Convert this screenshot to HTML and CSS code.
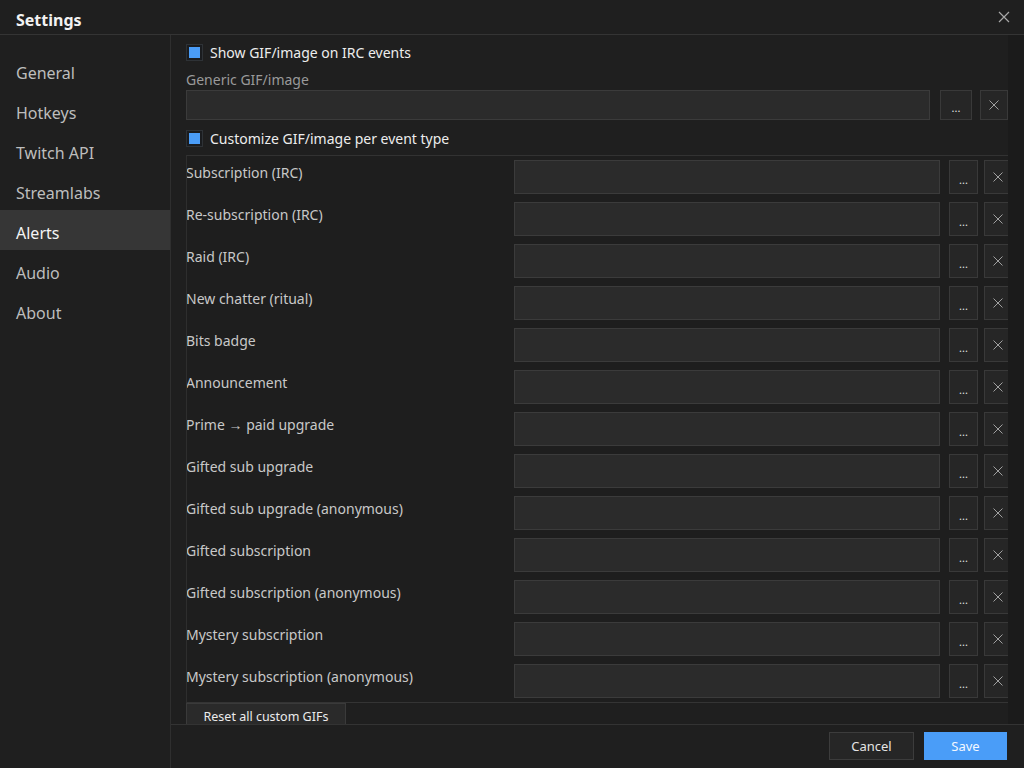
FILE: index.html
```html
<!DOCTYPE html>
<html>
<head>
<meta charset="utf-8">
<link rel="stylesheet" href="styles.css">
</head>
<body>
<div class="window">
  <div class="titlebar">
    <span class="title">Settings</span>
    <span class="close"><svg width="12" height="12" viewBox="0 0 12 12"><path d="M1 1L11 11M11 1L1 11" stroke="#a8a8a8" stroke-width="1.2" fill="none"/></svg></span>
  </div>
  <div class="main">
    <nav class="sidebar">
      <div class="nav-item">General</div>
      <div class="nav-item">Hotkeys</div>
      <div class="nav-item">Twitch API</div>
      <div class="nav-item">Streamlabs</div>
      <div class="nav-item active">Alerts</div>
      <div class="nav-item">Audio</div>
      <div class="nav-item">About</div>
    </nav>
    <div class="right">
      <div class="scroll">
        <div class="content">
          <label class="check first"><span class="box"><span class="tick"></span></span><span class="check-text">Show GIF/image on IRC events</span></label>
          <div class="field-label">Generic GIF/image</div>
          <div class="generic-row">
            <div class="input"></div>
            <div class="btn dots">...</div>
            <div class="btn x"><svg width="10" height="10" viewBox="0 0 10 10"><path d="M0.5 0.5L9.5 9.5M9.5 0.5L0.5 9.5" stroke="#a0a0a0" stroke-width="1" fill="none"/></svg></div>
          </div>
          <label class="check second"><span class="box"><span class="tick"></span></span><span class="check-text">Customize GIF/image per event type</span></label>
          <div class="table" id="table"></div>
          <div class="reset">Reset all custom GIFs</div>
        </div>
        <div class="track"></div>
      </div>
      <div class="footer">
        <div class="fbtn cancel">Cancel</div>
        <div class="fbtn save">Save</div>
      </div>
    </div>
  </div>
</div>
<script src="script.js"></script>
</body>
</html>
```
FILE: script.js
```js
const rows = ["Subscription (IRC)","Re-subscription (IRC)","Raid (IRC)","New chatter (ritual)","Bits badge","Announcement","Prime \u2192 paid upgrade","Gifted sub upgrade","Gifted sub upgrade (anonymous)","Gifted subscription","Gifted subscription (anonymous)","Mystery subscription","Mystery subscription (anonymous)"];
const t = document.getElementById('table');
const xsvg = '<svg width="10" height="10" viewBox="0 0 10 10"><path d="M0.5 0.5L9.5 9.5M9.5 0.5L0.5 9.5" stroke="#a0a0a0" stroke-width="1" fill="none"/></svg>';
t.innerHTML = rows.map(r => '<div class="row"><div class="row-label">' + r + '</div><div class="input"></div><div class="btn dots">...</div><div class="btn x">' + xsvg + '</div></div>').join('');
```
FILE: styles.css
```css
* { box-sizing: border-box; }
html, body { margin: 0; padding: 0; background: #1f1f1f; }
body { font-family: "Noto Sans", "Open Sans", sans-serif; color: #c8c8c8; overflow: hidden; }
.window { width: 1024px; height: 768px; display: flex; flex-direction: column; background: #1f1f1f; }
.titlebar { height: 35px; flex: none; border-bottom: 1px solid #343434; display: flex; align-items: center; justify-content: space-between; padding: 0 14px 0 16px; }
.title { font-size: 16px; font-weight: 700; color: #f2f2f2; position: relative; top: 3px; }
.close { display: flex; position: relative; top: 0px; }
.main { flex: 1; display: flex; min-height: 0; }
.sidebar { width: 171px; flex: none; border-right: 1px solid #2f2f2f; padding-top: 15px; }
.nav-item { height: 40px; padding-top: 12px; line-height: 22px; padding-left: 16px; font-size: 16px; color: #bdbdbd; }
.nav-item.active { background: #363636; color: #f4f4f4; }
.right { flex: 1; display: flex; flex-direction: column; min-width: 0; }
.scroll { flex: 1; display: flex; min-height: 0; overflow: hidden; }
.content { flex: 1; padding: 8px 0 0 15px; min-width: 0; }
.track { width: 16px; flex: none; background: #1b1b1b; }
.check { display: flex; align-items: center; height: 20px; }
.check.first { margin-top: -1px; }
.check.second { margin-top: 8px; }
.box { width: 17px; height: 17px; border: 1px solid #2e3236; background: #1a1c1f; display: flex; align-items: center; justify-content: center; margin-right: 7px; }
.tick { width: 11px; height: 11px; background: #4a9df8; }
.check-text { font-size: 14px; color: #ededed; }
.field-label { margin-top: 8px; height: 20px; line-height: 20px; font-size: 14px; color: #9a9a9a; }
.generic-row { display: flex; height: 30px; }
.generic-row .input { width: 744px; height: 30px; }
.generic-row .dots { width: 32px; margin-left: 10px; }
.generic-row .x { width: 28px; margin-left: 8px; }
.input { background: #2b2b2b; border: 1px solid #3b3b3b; }
.btn { background: #262626; border: 1px solid #393939; display: flex; align-items: center; justify-content: center; }
.dots { font-size: 11px; color: #e0e0e0; padding-top: 4px; letter-spacing: 0; }
.table { margin-top: 7px; border-top: 1px solid #323232; border-left: 1px solid #2e2e2e; border-bottom: 1px solid #343434; overflow: hidden; background: #1e1e1e; }
.row { display: grid; grid-template-columns: 327px 426px 38px 34px; height: 42px; }
.row .input { height: 34px; margin-top: 4px; }
.row .btn { height: 34px; margin-top: 4px; }
.row .dots { margin-left: 9px; width: 29px; }
.row .x { margin-left: 6px; width: 28px; }
.row-label { font-size: 14px; color: #c8c8c8; padding-top: 7px; margin-left: -1px; }
.reset { width: 160px; height: 28px; background: #2a2a2a; border: 1px solid #3a3a3a; font-size: 12.5px; color: #ececec; display: flex; align-items: center; justify-content: center; padding-bottom: 2px; }
.footer { height: 44px; flex: none; border-top: 1px solid #333; display: flex; justify-content: flex-end; align-items: flex-start; padding: 7px 17px 0 0; gap: 10px; }
.fbtn { height: 28px; display: flex; align-items: center; justify-content: center; font-size: 13px; }
.cancel { width: 85px; background: #262626; border: 1px solid #3c3c3c; color: #e4e4e4; }
.save { width: 83px; background: #4a9df8; color: #f4f8ff; }
```
